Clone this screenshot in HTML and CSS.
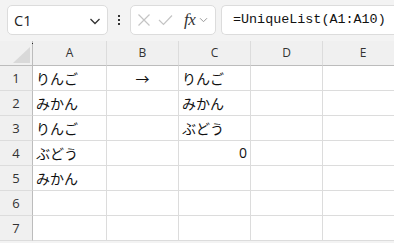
FILE: index.html
```html
<!DOCTYPE html>
<html>
<head>
<meta charset="utf-8">
<link rel="stylesheet" href="styles.css">
</head>
<body>
<div class="toolbar">
  <div class="namebox">
    <span class="name">C1</span>
    <svg class="chev" width="12" height="8" viewBox="0 0 12 8"><path d="M1.5 2 L6 6.5 L10.5 2" fill="none" stroke="#333" stroke-width="1.3"/></svg>
  </div>
  <div class="dots"><i></i><i></i><i></i></div>
  <div class="fxbox">
    <svg width="14" height="14" viewBox="0 0 14 14"><path d="M1.5 1.5 L12.5 12.5 M12.5 1.5 L1.5 12.5" stroke="#c4c4c4" stroke-width="1.2" fill="none"/></svg>
    <svg width="15" height="12" viewBox="0 0 15 12"><path d="M1 6 L5.5 10.5 L14 1.5" stroke="#c4c4c4" stroke-width="1.2" fill="none"/></svg>
    <span class="fx">fx</span>
    <svg class="chev2" width="9" height="6" viewBox="0 0 9 6"><path d="M1 1.2 L4.5 4.7 L8 1.2" fill="none" stroke="#999" stroke-width="1"/></svg>
  </div>
  <div class="formula">=UniqueList(A1:A10)</div>
</div>
<div class="sheet">
  <div class="corner"><span class="tri"></span><span class="dot"></span></div>
  <div class="ch">A</div><div class="ch">B</div><div class="ch">C</div><div class="ch">D</div><div class="ch last">E</div>

  <div class="rh">1</div><div class="c">りんご</div><div class="c ctr">→</div><div class="c">りんご</div><div class="c"></div><div class="c"></div>
  <div class="rh">2</div><div class="c">みかん</div><div class="c"></div><div class="c">みかん</div><div class="c"></div><div class="c"></div>
  <div class="rh">3</div><div class="c">りんご</div><div class="c"></div><div class="c">ぶどう</div><div class="c"></div><div class="c"></div>
  <div class="rh">4</div><div class="c">ぶどう</div><div class="c"></div><div class="c num">0</div><div class="c"></div><div class="c"></div>
  <div class="rh">5</div><div class="c">みかん</div><div class="c"></div><div class="c"></div><div class="c"></div><div class="c"></div>
  <div class="rh">6</div><div class="c"></div><div class="c"></div><div class="c"></div><div class="c"></div><div class="c"></div>
  <div class="rh">7</div><div class="c"></div><div class="c"></div><div class="c"></div><div class="c"></div><div class="c"></div>
</div>
</body>
</html>
```
FILE: styles.css
```css
* { box-sizing: border-box; }
html, body { margin: 0; padding: 0; }
body {
  width: 394px;
  height: 243px;
  overflow: hidden;
  background: #f3f3f3;
  font-family: "Noto Sans", "Noto Sans CJK JP", sans-serif;
  color: #222;
}
.toolbar {
  height: 41px;
  display: flex;
  align-items: flex-start;
  padding: 5px 0 0 7px;
}
.namebox {
  width: 101px;
  height: 30px;
  background: #fff;
  border: 1px solid #dcdcdc;
  border-radius: 5px;
  display: flex;
  align-items: center;
  justify-content: space-between;
  padding: 0 6px 0 6px;
}
.name {
  font-family: "Open Sans", "Noto Sans", sans-serif;
  font-size: 14.5px;
  color: #222;
}
.chev { margin-top: 1px; }
.dots {
  width: 22px;
  height: 30px;
  display: flex;
  flex-direction: column;
  align-items: center;
  justify-content: center;
  gap: 2px;
}
.dots i {
  display: block;
  width: 2px;
  height: 2px;
  background: #333;
}
.fxbox {
  width: 86px;
  height: 30px;
  background: #fff;
  border: 1px solid #dcdcdc;
  border-radius: 5px;
  display: flex;
  align-items: center;
  padding: 0 0 0 6px;
  gap: 7px;
}
.fx {
  font-family: "Liberation Serif", "DejaVu Serif", serif;
  font-style: italic;
  font-size: 17px;
  color: #333;
  margin-left: 4px;
  letter-spacing: -0.5px;
}
.chev2 { margin-left: -3px; }
.formula {
  margin-left: 5px;
  flex: 1;
  height: 30px;
  background: #fff;
  border: 1px solid #dcdcdc;
  border-right: none;
  border-radius: 5px 0 0 5px;
  font-family: "Liberation Mono", "DejaVu Sans Mono", monospace;
  font-size: 13.4px;
  line-height: 28px;
  padding-left: 11px;
  color: #111;
}
.sheet {
  display: grid;
  grid-template-columns: 33px 74px 72px 72px 72px 80px;
  grid-template-rows: repeat(8, 25px);
  background: #fff;
}
.corner {
  position: relative;
  background: #f0f0f0;
  border-right: 1px solid #bcbcbc;
  border-bottom: 1px solid #bcbcbc;
}
.tri {
  position: absolute;
  left: 13px;
  top: 6px;
  width: 0;
  height: 0;
  border-left: 17px solid transparent;
  border-bottom: 16px solid #d9d9d9;
}
.dot {
  position: absolute;
  left: 32px;
  top: 2px;
  width: 1px;
  height: 1px;
  background: #222;
}
.ch {
  background: #f0f0f0;
  border-right: 1px solid #dcdcdc;
  border-bottom: 1px solid #bcbcbc;
  text-align: center;
  font-family: "Open Sans", "Noto Sans", sans-serif;
  font-size: 12px;
  line-height: 24px;
  color: #333;
}
.ch.last { border-right: none; }
.rh {
  background: #f0f0f0;
  border-right: 1px solid #bcbcbc;
  border-bottom: 1px solid #dcdcdc;
  text-align: center;
  font-family: "Open Sans", "Noto Sans", sans-serif;
  font-size: 13px;
  line-height: 24px;
  color: #333;
  padding-left: 0;
}
.c {
  border-right: 1px solid #dcdcdc;
  border-bottom: 1px solid #dcdcdc;
  font-family: "Noto Sans CJK JP", sans-serif;
  font-size: 14px;
  line-height: 24px;
  padding-left: 3px;
  color: #111;
  white-space: nowrap;
}
.c.ctr { text-align: center; padding-left: 0; }
.c.num {
  text-align: right;
  padding-right: 3px;
  font-family: "Open Sans", "Noto Sans", sans-serif;
}
```
